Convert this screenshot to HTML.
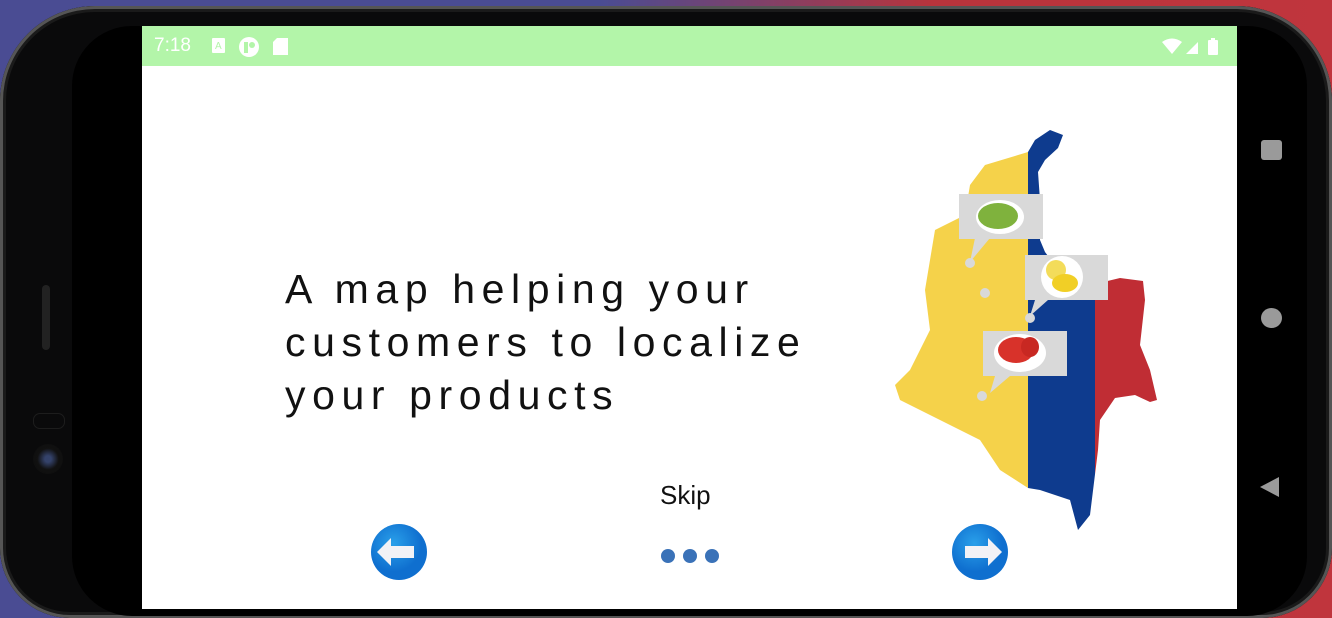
<!DOCTYPE html>
<html><head><style>
html,body{margin:0;padding:0;width:1332px;height:618px;overflow:hidden;}
body{position:relative;background:linear-gradient(90deg,#4a4c93 0%,#4a4c93 45%,#b8343c 70%,#c0353d 100%);font-family:"Liberation Sans",sans-serif;}
.phone{position:absolute;left:0;top:6px;width:1332px;height:612px;background:#0a0a0b;border-radius:95px 95px 70px 70px;box-shadow:inset 0 0 0 3px #555,inset 0 0 0 6px #1a1a1a;}
.inner{position:absolute;left:72px;top:26px;width:1235px;height:590px;background:#000;border-radius:60px;}
.screen{position:absolute;left:142px;top:26px;width:1095px;height:583px;background:#fff;overflow:hidden;}
.status{position:absolute;left:0;top:0;width:1095px;height:40px;background:#b3f5a9;color:#fff;}
.time{position:absolute;left:12px;top:9px;font-size:19px;}
.title{position:absolute;left:143px;top:237px;font-size:41px;line-height:53px;letter-spacing:6.6px;color:#111;font-family:"Liberation Sans",sans-serif;}
.skip{position:absolute;left:518px;top:454px;font-size:26px;color:#111;}
.dot{position:absolute;top:523px;width:14px;height:14px;border-radius:50%;background:#3a72b8;}
</style></head><body>
<div class="phone"></div>
<div class="inner"></div>
<div style="position:absolute;left:42px;top:285px;width:8px;height:65px;border-radius:4px;background:#222;"></div>
<div style="position:absolute;left:33px;top:413px;width:30px;height:14px;border-radius:7px;border:1px solid #1d1d1d;"></div>
<div style="position:absolute;left:33px;top:444px;width:30px;height:30px;border-radius:50%;background:radial-gradient(circle,#34426a 15%,#111 50%,#0c0c0c 100%);"></div>
<div style="position:absolute;left:1261px;top:140px;width:21px;height:20px;border-radius:3px;background:#9a9a9a;"></div>
<div style="position:absolute;left:1261px;top:308px;width:21px;height:20px;border-radius:50%;background:#9a9a9a;"></div>
<svg style="position:absolute;left:1258px;top:475px" width="24" height="24"><polygon points="2,12 21,2 21,22" fill="#9a9a9a"/></svg>
<div class="screen">
 <div class="status">
  <div class="time">7:18</div>
  <svg style="position:absolute;left:70px;top:12px" width="14" height="16"><rect width="13" height="15" rx="1" fill="#fff"/><text x="3" y="11" font-size="10" fill="#b3f5a9" font-family="Liberation Sans">A</text></svg>
  <svg style="position:absolute;left:96px;top:10px" width="22" height="22"><circle cx="11" cy="11" r="10" fill="#fff"/><rect x="6" y="6" width="4" height="11" fill="#b3f5a9"/><circle cx="14" cy="9" r="3" fill="#b3f5a9"/></svg>
  <svg style="position:absolute;left:131px;top:12px" width="16" height="18"><path d="M4 0H15V17H0V4Z" fill="#fff"/></svg>
  <svg style="position:absolute;left:1020px;top:12px" width="70" height="18"><path d="M0 4Q10 -3 20 4L10 16Z" fill="#fff"/><path d="M24 16L36 4V16Z" fill="#fff"/><rect x="46" y="2" width="10" height="15" rx="1" fill="#fff"/><rect x="49" y="0" width="4" height="3" fill="#fff"/></svg>
 </div>
 <div class="title">A map helping your<br>customers to localize<br>your products</div>
 <div class="skip">Skip</div>
 <div class="dot" style="left:519px"></div><div class="dot" style="left:541px"></div><div class="dot" style="left:563px"></div>
 <svg style="position:absolute;left:228px;top:497px" width="60" height="60"><defs><radialGradient id="g" cx="40%" cy="35%"><stop offset="0" stop-color="#2aa0ea"/><stop offset="1" stop-color="#0f6fcf"/></radialGradient></defs><ellipse cx="29" cy="29" rx="28" ry="28" fill="url(#g)"/><path d="M7 29L21 15V23H44V35H21V43Z" fill="#f2f2f6"/></svg>
 <svg style="position:absolute;left:809px;top:497px" width="60" height="60"><ellipse cx="29" cy="29" rx="28" ry="28" fill="url(#g)"/><path d="M51 29L37 15V23H14V35H37V43Z" fill="#f2f2f6"/></svg>
 <svg style="position:absolute;left:0;top:0" width="1095" height="583" viewBox="142 26 1095 583">
  <defs><clipPath id="c"><path d="M1050,130 L1063,135 L1058,148 L1045,160 L1038,172 L1040,200 L1040,240 L1045,252 L1060,272 L1095,284 L1120,278 L1143,281 L1145,300 L1140,345 L1150,370 L1157,400 L1150,402 L1135,395 L1115,398 L1100,420 L1098,450 L1090,515 L1078,530 L1070,500 L1040,490 L1028,488 L1000,470 L980,440 L940,420 L900,400 L895,385 L910,370 L930,330 L925,290 L930,260 L935,230 L965,215 L970,185 L985,165 L1028,152 L1035,140 Z"/></clipPath></defs>
  <g clip-path="url(#c)"><rect x="880" y="120" width="148" height="420" fill="#f5d24a"/><rect x="1028" y="120" width="67" height="420" fill="#0e3b8e"/><rect x="1095" y="120" width="80" height="420" fill="#c02d34"/></g>
  <g fill="#d9d9d9">
   <rect x="959" y="194" width="84" height="45"/><path d="M975,238 L990,238 L970,262Z"/><circle cx="970" cy="263" r="5"/>
   <circle cx="985" cy="293" r="5"/>
   <rect x="1025" y="255" width="83" height="45"/><path d="M1035,300 L1048,300 L1030,316Z"/><circle cx="1030" cy="318" r="5"/>
   <rect x="983" y="331" width="84" height="45"/><path d="M995,376 L1010,376 L990,393Z"/><circle cx="982" cy="396" r="5"/>
  </g>
  <ellipse cx="1000" cy="217" rx="24" ry="17" fill="#fff"/><ellipse cx="998" cy="216" rx="20" ry="13" fill="#7fb23d"/>
  <ellipse cx="1062" cy="277" rx="21" ry="21" fill="#fff"/><circle cx="1056" cy="270" r="10" fill="#f3dc5a"/><ellipse cx="1065" cy="283" rx="13" ry="9" fill="#f1cf26"/>
  <ellipse cx="1020" cy="353" rx="26" ry="19" fill="#fff"/><ellipse cx="1016" cy="350" rx="18" ry="13" fill="#d8322a"/><ellipse cx="1030" cy="347" rx="9" ry="10" fill="#c82822"/>
 </svg>
</div>
</body></html>
